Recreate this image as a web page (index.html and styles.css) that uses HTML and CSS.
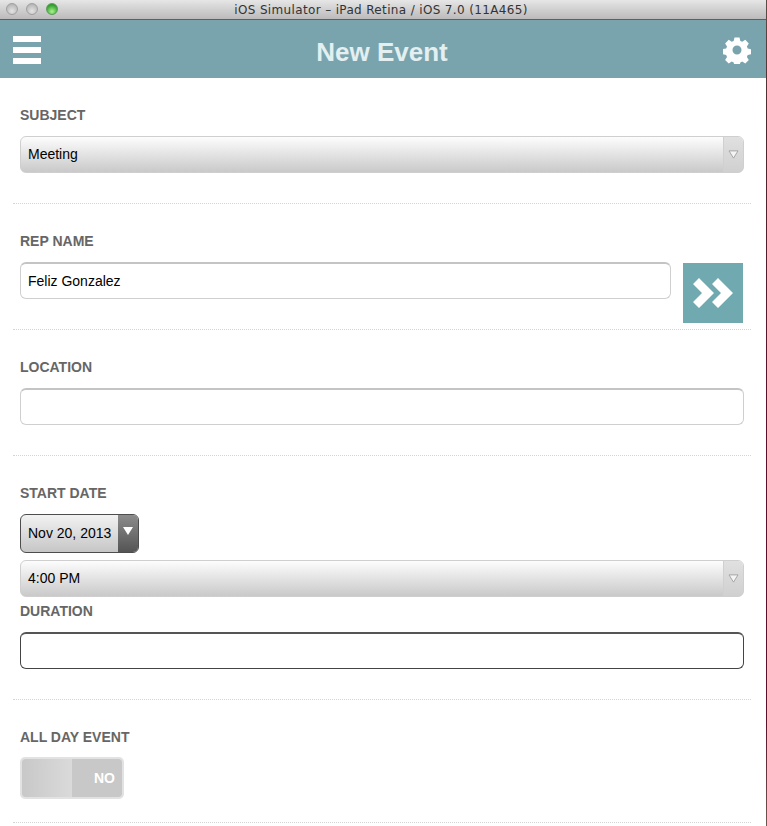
FILE: index.html
```html
<!DOCTYPE html>
<html lang="en">

<head>
  <meta charset="UTF-8">
  <meta name="viewport" content="width=device-width, initial-scale=1.0">
  <title>New Event</title>
  <link rel="stylesheet" href="styles.css">
</head>

<body>
  <div class="window">
    <div class="titlebar">
      <div class="lights">
        <span class="light"></span>
        <span class="light"></span>
        <span class="light green"></span>
      </div>
      <div class="titlebar-text">iOS Simulator – iPad Retina / iOS 7.0 (11A465)</div>
    </div>

    <div class="header">
      <div class="menu"><span></span><span></span><span></span></div>
      <h1>New Event</h1>
      <svg class="gear" width="28" height="28" viewBox="0 0 28 28">
        <path fill="#fff" fill-rule="evenodd" d="M11.2 0h5.6l.9 3.9 2.1.9 3.4-2.1 3.9 4-2.1 3.3.9 2.2 3.9.9v5.6l-3.9.9-.9 2.1 2.1 3.4-3.9 3.9-3.4-2.1-2.1.9-.9 3.9h-5.6l-.9-3.9-2.2-.9-3.3 2.1-4-3.9 2.1-3.4-.9-2.1-3.9-.9v-5.6l3.900-.9.900-2.200-2.100-3.300 4-4 3.300 2.100 2.200-.9zM14 9a5 5 0 1 0 0 10 5 5 0 0 0 0-10z" transform="translate(1.400 1.400) scale(.9)"/>
      </svg>
    </div>

    <div class="section">
      <label class="field-label">SUBJECT</label>
      <div class="select">
        <span class="select-value">Meeting</span>
        <span class="select-arrow">
          <svg width="11" height="9" viewBox="0 0 12 10"><path d="M1 1h10L6 9z" fill="#f4f4f4" stroke="#a0a0a0"/></svg>
        </span>
      </div>
    </div>

    <div class="section">
      <label class="field-label">REP NAME</label>
      <div class="rep-row">
        <input class="text-input" type="text" value="Feliz Gonzalez">
        <div class="go-btn">
          <svg width="44" height="32" viewBox="0 0 44 32">
            <path fill="#fff" d="M7 1l15 15L7 31l-6-6 9-9-9-9zM26 1l15 15-15 15-6-6 9-9-9-9z"/>
          </svg>
        </div>
      </div>
    </div>

    <div class="section">
      <label class="field-label">LOCATION</label>
      <input class="text-input" type="text">
    </div>

    <div class="section">
      <label class="field-label">START DATE</label>
      <div class="date-btn">
        <span class="date-value">Nov 20, 2013</span>
        <span class="date-arrow">
          <svg width="10" height="8" viewBox="0 0 10 8"><path d="M0 0h10L5 8z" fill="#fff"/></svg>
        </span>
      </div>
      <div class="select time-select">
        <span class="select-value">4:00 PM</span>
        <span class="select-arrow">
          <svg width="11" height="9" viewBox="0 0 12 10"><path d="M1 1h10L6 9z" fill="#f4f4f4" stroke="#a0a0a0"/></svg>
        </span>
      </div>
      <label class="field-label duration-label">DURATION</label>
      <input class="text-input focused" type="text">
    </div>

    <div class="section last">
      <label class="field-label toggle-label">ALL DAY EVENT</label>
      <div class="toggle">
        <div class="toggle-knob"></div>
        <div class="toggle-text">NO</div>
      </div>
    </div>
  </div>
</body>

</html>
```

FILE: styles.css
```css
* {
  box-sizing: border-box;
}

html,
body {
  height: 100%;
}

body {
  margin: 0;
  padding: 0 1px 0 0;
  overflow: hidden;
  background: linear-gradient(#5a4f48 0, #4a2a30 120px, #5c0f2c 400px, #5c0f2c 720px, #6a5a50 826px);
  font-family: "Liberation Sans", Arial, sans-serif;
  font-size: 14px;
}

.window {
  height: 100%;
  background-color: #fff;
}

/* simulator title bar */
.titlebar {
  display: flex;
  align-items: center;
  height: 20px;
  padding-bottom: 1px;
  position: relative;
  background: linear-gradient(#e6e6e6, #bcbaba);
  border-bottom: 1px solid #5f5f5f;
}

.lights {
  display: flex;
  gap: 8px;
  padding-left: 6px;
}

.light {
  width: 12px;
  height: 12px;
  border-radius: 50%;
  background: radial-gradient(circle at 50% 70%, #e4e4e4, #a9a9a9);
  border: 1px solid #a0a0a0;
}

.light.green {
  background: radial-gradient(circle at 50% 75%, #a8f58c, #2f9a2c 75%);
  border-color: #5b9a58;
}

.titlebar-text {
  position: absolute;
  left: 0;
  right: 4px;
  top: 2px;
  text-align: center;
  font-family: "DejaVu Sans", sans-serif;
  font-size: 12px;
  line-height: 16px;
  letter-spacing: 0.35px;
  color: #333;
}

/* app header */
.header {
  display: flex;
  align-items: center;
  justify-content: space-between;
  height: 58px;
  padding: 0 15px 0 13px;
  background-color: #79a4ad;
}

.header h1 {
  margin: 6px 0 0 0;
  font-size: 26px;
  font-weight: bold;
  color: #e3eff0;
}

.menu {
  display: flex;
  flex-direction: column;
  gap: 5px;
  width: 28px;
  margin-top: 1px;
}

.menu span {
  display: block;
  height: 6px;
  background-color: #fff;
}

.gear {
  margin-top: 2px;
}

/* form */
.section {
  margin: 0 15px 0 13px;
  padding: 29px 7px 30px 7px;
  border-bottom: 1px dotted #d4d4d4;
}

.section.last {
  padding-bottom: 23px;
}

.field-label {
  display: block;
  height: 16px;
  margin-bottom: 13px;
  font-size: 14px;
  line-height: 16px;
  font-weight: bold;
  color: #666;
}

.toggle-label {
  margin-bottom: 12px;
}

.select {
  display: flex;
  height: 37px;
  border: 1px solid #cfcfcf;
  border-radius: 6px;
  background: linear-gradient(#fdfdfd, #c9c9c9);
  overflow: hidden;
}

.select-value {
  flex: 1;
  padding-left: 7px;
  line-height: 35px;
  color: #000;
}

.select-arrow {
  display: flex;
  align-items: center;
  justify-content: center;
  width: 20px;
  padding-right: 1px;
  background: linear-gradient(#e0e0e0, #d0d0d0);
  border-left: 1px solid #d0d0d0;
}

.text-input {
  display: block;
  width: 100%;
  height: 37px;
  padding: 0 7px;
  border: 1px solid #cfcfcf;
  border-top: 2px solid #c4c4c4;
  border-radius: 6px;
  background-color: #fff;
  font-family: "Liberation Sans", Arial, sans-serif;
  font-size: 14px;
  color: #000;
  outline: none;
}

.text-input.focused {
  border: 1px solid #444;
  border-top: 2px solid #555;
}

.rep-row {
  display: flex;
  align-items: flex-start;
  gap: 12px;
  height: 37px;
}

.rep-row .text-input {
  flex: 1;
  width: auto;
  min-width: 0;
}

.go-btn {
  flex: none;
  display: flex;
  align-items: center;
  justify-content: center;
  width: 60px;
  height: 60px;
  margin: 1px 1px 0 0;
  background-color: #70a9b0;
}

.go-btn svg {
  margin-left: 1px;
}

.date-btn {
  display: flex;
  width: 119px;
  height: 39px;
  border: 1px solid #4d4d4d;
  border-radius: 6px;
  background: linear-gradient(#f2f2f2, #c6c6c6);
  overflow: hidden;
}

.date-value {
  flex: 1;
  padding-left: 7px;
  line-height: 36px;
  white-space: nowrap;
  color: #000;
}

.date-arrow {
  flex: none;
  display: flex;
  justify-content: center;
  width: 20px;
  padding-top: 12px;
  background: linear-gradient(#8c8c8c, #545454);
}

.time-select {
  margin-top: 7px;
}

.duration-label {
  margin-top: 6px;
}

.toggle {
  display: flex;
  width: 104px;
  height: 42px;
  border: 2px solid #e2e2e2;
  border-radius: 5px;
  overflow: hidden;
}

.toggle-knob {
  width: 50px;
  background: linear-gradient(to right, #c8c8c8, #dadada);
}

.toggle-text {
  flex: 1;
  padding-right: 7px;
  text-align: right;
  line-height: 38px;
  font-weight: bold;
  color: #fff;
  background-color: #c8c8c8;
}
```
